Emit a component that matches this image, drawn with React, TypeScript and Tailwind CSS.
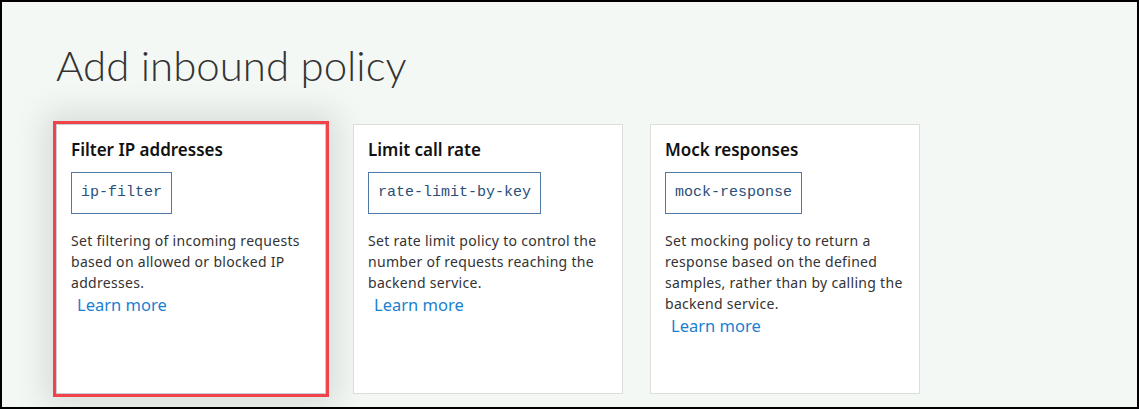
const policies = [
  {
    title: 'Filter IP addresses',
    code: 'ip-filter',
    description: 'Set filtering of incoming requests based on allowed or blocked IP addresses.',
    selected: true,
  },
  {
    title: 'Limit call rate',
    code: 'rate-limit-by-key',
    description: 'Set rate limit policy to control the number of requests reaching the backend service.',
  },
  {
    title: 'Mock responses',
    code: 'mock-response',
    description: 'Set mocking policy to return a response based on the defined samples, rather than by calling the backend service.',
  },
]

const PolicyCard = ({ policy }: { policy: (typeof policies)[number] }) => {
  return (
    <div
      className={
        policy.selected
          ? 'w-[270px] h-[270px] bg-white border border-[#c8ccd4] outline-[3px] outline-solid outline-[#f0444a] shadow-[0_0_30px_12px_rgba(0,0,0,0.11)] px-[14px] pt-[14px]'
          : 'w-[270px] h-[270px] bg-white border border-[#dcdedc] px-[14px] pt-[14px]'
      }
    >
      <h2 className="text-[17px] font-semibold text-[#111] leading-[22px] font-['Noto_Sans',sans-serif]">
        {policy.title}
      </h2>
      <div className="mt-[11px] inline-flex items-center h-[42px] px-[9px] border border-[#4f79a6] text-[#2a4f78] text-[15px] font-['Liberation_Mono',monospace]">
        {policy.code}
      </div>
      <p className="mt-[16px] text-[14px] leading-[21px] text-[#333] font-['Noto_Sans',sans-serif] tracking-[0.3px]">
        {policy.description}
      </p>
      <a className="block ml-[6px] mt-[0px] text-[16.5px] leading-[24px] text-[#1a7fd1] font-['Noto_Sans',sans-serif]">
        Learn more
      </a>
    </div>
  )
}

export default function App() {
  return (
    <div className="w-[1139px] h-[409px] box-border border-2 border-black bg-[#f4f8f5] pl-[54px] pt-[37px] overflow-hidden">
      <h1 className="text-[42px] leading-[52px] font-light text-[#333] font-['Lato',sans-serif]">
        Add inbound policy
      </h1>
      <div className="flex gap-[27px] mt-[33px]">
        {policies.map((p) => (
          <PolicyCard key={p.code} policy={p} />
        ))}
      </div>
    </div>
  )
}
